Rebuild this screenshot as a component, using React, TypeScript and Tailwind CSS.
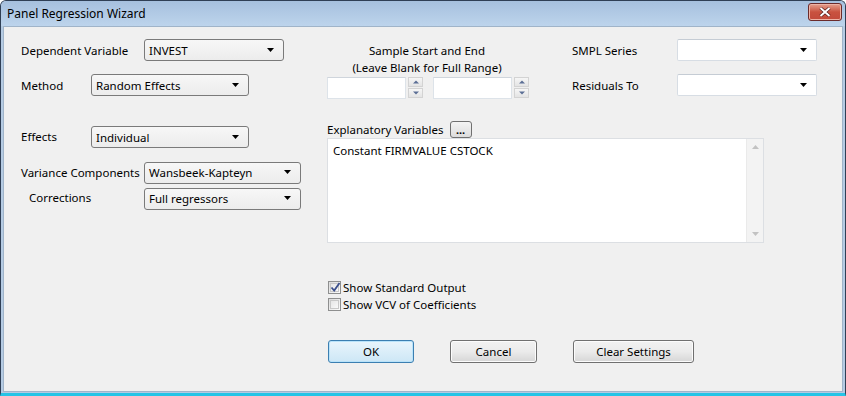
import React from "react";

const font = { fontFamily: '"Noto Sans", "DejaVu Sans", sans-serif' };

function Arrow() {
  return (
    <svg width="8" height="5" viewBox="0 0 8 5" className="shrink-0">
      <path d="M0 0 H7 L3.5 4 Z" fill="#000" />
    </svg>
  );
}

function Combo({ value, w, editable }: { value?: string; w: string; editable?: boolean }) {
  return editable ? (
    <div className={`${w} h-[22px] flex items-center justify-between pl-[4px] pr-[8px] bg-white border border-[#d7dde4] border-t-[#c5ccd4] rounded-[2px]`}>
      <span>{value}</span>
      <Arrow />
    </div>
  ) : (
    <div className={`${w} h-[22px] flex items-center justify-between pl-[4px] pr-[8px] bg-gradient-to-b from-[#f7f7f7] to-[#ececec] border border-[#7a7a7a] rounded-[3px] text-[#000]`}>
      <span className="pt-[1px]">{value}</span>
      <Arrow />
    </div>
  );
}

function Spin() {
  const btn = "w-[15px] h-[10px] bg-gradient-to-b from-[#f6f6f6] to-[#e4e4e4] border border-[#d3d3d3] flex items-center justify-center";
  return (
    <div className="flex flex-col gap-[1px] ml-[2px]">
      <div className={btn}>
        <svg width="6" height="4" viewBox="0 0 6 4"><path d="M0 3.5 L3 0.5 L6 3.5 Z" fill="#5b6e95" /></svg>
      </div>
      <div className={btn}>
        <svg width="6" height="4" viewBox="0 0 6 4"><path d="M0 0.5 L6 0.5 L3 3.5 Z" fill="#5b6e95" /></svg>
      </div>
    </div>
  );
}

function Btn({ label, w, def }: { label: string; w: string; def?: boolean }) {
  return def ? (
    <div className={`${w} h-[23px] flex items-center justify-center rounded-[3px] border border-[#3c7fb1] bg-gradient-to-b from-[#e9f5fc] to-[#cde7f6] shadow-[inset_0_0_0_1px_#b9e3fa]`}>
      {label}
    </div>
  ) : (
    <div className={`${w} h-[23px] flex items-center justify-center rounded-[3px] border border-[#707070] bg-gradient-to-b from-[#f2f2f2] via-[#ebebeb] to-[#d6d6d6] shadow-[inset_0_0_0_1px_#fcfcfc]`}>
      {label}
    </div>
  );
}

function Check({ checked }: { checked?: boolean }) {
  return (
    <div className="w-[13px] h-[13px] shrink-0 border border-[#8e8f8f] bg-gradient-to-br from-[#dcdcdc] to-[#fbfbfb] flex items-center justify-center">
      <div className="w-[9px] h-[9px] bg-gradient-to-br from-[#e6e6e6] to-[#f9f9f9] border border-[#c8c8c8] flex items-center justify-center relative">
        {checked && (
          <svg width="11" height="11" viewBox="0 0 11 11" className="absolute -top-[2px] -left-[1px]">
            <path d="M1.5 5.5 L4.2 8.5 L9.5 1" stroke="#3b4f8c" strokeWidth="1.8" fill="none" />
          </svg>
        )}
      </div>
    </div>
  );
}

export default function App() {
  return (
    <div className="w-[846px] h-[396px] flex flex-col bg-[#b5cbe3] border border-[#2f3f55] border-b-[3px] border-b-[#25c4e6] rounded-t-[6px] overflow-hidden text-[11.5px] text-[#000] whitespace-nowrap" style={font}>
      {/* Title bar */}
      <div className="h-[25px] shrink-0 flex items-center justify-between pl-[6px] pr-[3px] bg-gradient-to-b from-[#a6c0de] to-[#bdd4ec]">
        <span className="text-[12px] text-black">Panel Regression Wizard</span>
        <div className="w-[34px] h-[18px] mb-[3px] rounded-[3px] border border-[#6b2b2b] bg-gradient-to-b from-[#e3a08f] via-[#c9523f] to-[#c24a3b] flex items-center justify-center shadow-[inset_0_0_0_1px_#eeb3a5]">
          <svg width="12" height="10" viewBox="0 0 12 10">
            <path d="M1.5 1 L10.5 9 M10.5 1 L1.5 9" stroke="#4a1818" strokeWidth="3.2" />
            <path d="M1.5 1 L10.5 9 M10.5 1 L1.5 9" stroke="#fff" strokeWidth="2" />
          </svg>
        </div>
      </div>
      {/* Body */}
      <div className="flex-1 mx-[2px] mb-[1px] border border-[#a0b4c9] bg-[#f0f0f0] flex pl-[17px] pt-[12px]">
        {/* Left column */}
        <div className="w-[284px] flex flex-col">
          <div className="flex items-center h-[22px]">
            <span className="w-[123px] pt-[1px]">Dependent Variable</span>
            <Combo value="INVEST" w="w-[140px]" />
          </div>
          <div className="flex items-center h-[22px] mt-[13px]">
            <span className="w-[70px] pt-[1px]">Method</span>
            <Combo value="Random Effects" w="w-[158px]" />
          </div>
          <div className="flex items-center h-[22px] mt-[30px]">
            <span className="w-[70px] -mt-[1px]">Effects</span>
            <Combo value="Individual" w="w-[158px]" />
          </div>
          <div className="flex items-center h-[23px] mt-[13px]">
            <span className="w-[123px]">Variance Components</span>
            <Combo value="Wansbeek-Kapteyn" w="w-[157px]" />
          </div>
          <div className="flex items-center h-[23px] mt-[3px]">
            <span className="w-[115px] ml-[8px] -mt-[1px]">Corrections</span>
            <Combo value="Full regressors" w="w-[157px]" />
          </div>
        </div>
        {/* Right area */}
        <div className="ml-[22px] flex flex-col">
          <div className="flex">
            <div className="w-[200px] flex flex-col items-center mt-[3px]">
              <div className="leading-[17px] text-center">Sample Start and End</div>
              <div className="leading-[17px] text-center">(Leave Blank for Full Range)</div>
              <div className="flex w-full mt-[1px]">
                <div className="flex">
                  <div className="w-[79px] h-[22px] bg-white border border-[#dde3e9] border-t-[#cfd5dc]" />
                  <Spin />
                </div>
                <div className="flex ml-[10px]">
                  <div className="w-[79px] h-[22px] bg-white border border-[#dde3e9] border-t-[#cfd5dc]" />
                  <Spin />
                </div>
              </div>
            </div>
            <div className="ml-[45px] flex flex-col">
              <div className="flex items-center h-[22px]">
                <span className="w-[105px] pt-[1px]">SMPL Series</span>
                <Combo w="w-[140px]" editable />
              </div>
              <div className="flex items-center h-[22px] mt-[13px]">
                <span className="w-[105px] pt-[1px]">Residuals To</span>
                <Combo w="w-[140px]" editable />
              </div>
            </div>
          </div>
          <div className="flex items-center mt-[21px] h-[18px]">
            <span className="pt-[1px]">Explanatory Variables</span>
            <div className="ml-[6px] w-[22px] h-[17px] rounded-[3px] border border-[#707070] bg-gradient-to-b from-[#f4f4f4] to-[#dcdcdc] flex items-end justify-center leading-[12px] font-bold text-[11px] pb-[1px]">...</div>
          </div>
          <div className="mt-[0px] w-[437px] h-[105px] bg-white border border-[#dcdfe3] flex">
            <div className="flex-1 pl-[5px] pt-[3px] leading-[17px]">Constant FIRMVALUE CSTOCK</div>
            <div className="w-[17px] bg-[#f3f3f3] border-l border-[#eaeaea] flex flex-col justify-between items-center py-[6px]">
              <svg width="7" height="4" viewBox="0 0 7 4"><path d="M0 4 L3.5 0 L7 4 Z" fill="#c2c2c2" /></svg>
              <svg width="7" height="4" viewBox="0 0 7 4"><path d="M0 0 L7 0 L3.5 4 Z" fill="#c2c2c2" /></svg>
            </div>
          </div>
          <div className="flex flex-col mt-[38px] ml-[1px] gap-[4px]">
            <div className="flex items-center gap-[2px] h-[13px]">
              <Check checked />
              <span className="leading-[14px] pt-[1px]">Show Standard Output</span>
            </div>
            <div className="flex items-center gap-[2px] h-[13px]">
              <Check />
              <span className="leading-[14px] pt-[1px]">Show VCV of Coefficients</span>
            </div>
          </div>
          <div className="flex mt-[29px] ml-[1px]">
            <Btn label="OK" w="w-[86px]" def />
            <div className="ml-[36px]"><Btn label="Cancel" w="w-[87px]" /></div>
            <div className="ml-[36px]"><Btn label="Clear Settings" w="w-[121px]" /></div>
          </div>
        </div>
      </div>
    </div>
  );
}
